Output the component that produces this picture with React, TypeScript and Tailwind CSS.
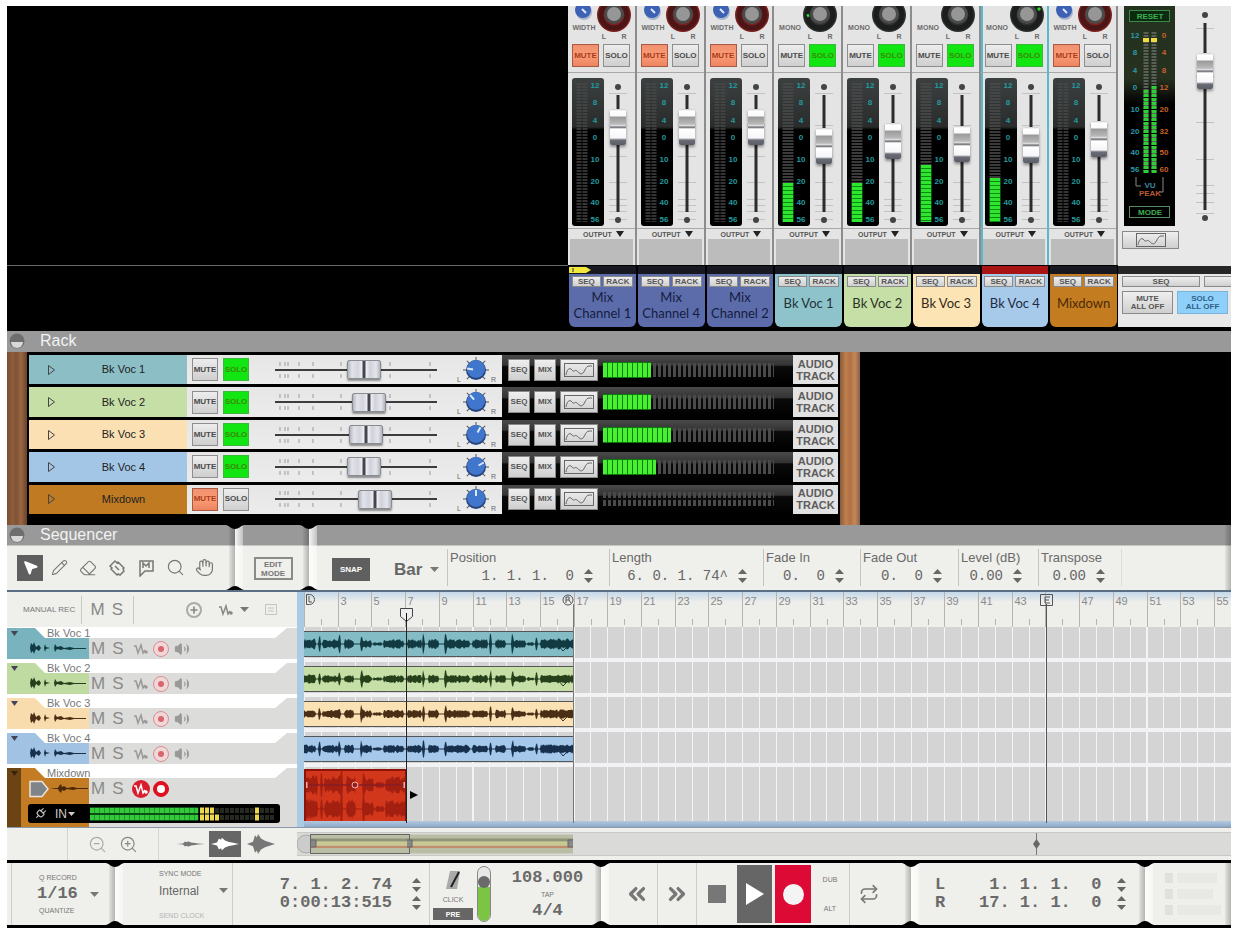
import { useState } from "react";
import type { ReactNode } from "react";
import {
  ChevronsLeft,
  ChevronsRight,
  Eraser,
  Hand,
  MousePointer2,
  Pencil,
  Plug,
  Plus,
  Repeat,
  Search,
  Volume2,
  ZoomIn,
  ZoomOut,
} from "lucide-react";
import { clsx } from "clsx";

interface Channel {
  name: string;
  color: string;
  text: string;
  stereo: boolean;
  muted: boolean;
  solo: boolean;
  fader: number;
  meterTop?: number;
  panTick?: string;
  selected?: boolean;
}

const blue = "bg-[#5c6cab]";

const channels: Channel[] = [
  { name: "Mix Channel 1", color: blue, text: "text-[#141c40]", stereo: true, muted: true, solo: false, fader: 78 },
  { name: "Mix Channel 4", color: blue, text: "text-[#141c40]", stereo: true, muted: true, solo: false, fader: 78 },
  { name: "Mix Channel 2", color: blue, text: "text-[#141c40]", stereo: true, muted: true, solo: false, fader: 78 },
  { name: "Bk Voc 1", color: "bg-[#8fc3cb]", text: "text-[#22333a]", stereo: false, muted: false, solo: true, fader: 57, meterTop: 105, panTick: "M33 10l2-1" },
  { name: "Bk Voc 2", color: "bg-[#c6dfa6]", text: "text-[#2b3322]", stereo: false, muted: false, solo: true, fader: 63, meterTop: 105 },
  { name: "Bk Voc 3", color: "bg-[#fce4b4]", text: "text-[#33291a]", stereo: false, muted: false, solo: true, fader: 59, meterTop: 87 },
  { name: "Bk Voc 4", color: "bg-[#a8caea]", text: "text-[#1d2c44]", stereo: false, muted: false, solo: true, fader: 58, meterTop: 100, panTick: "M57 4l2-2", selected: true },
  { name: "Mixdown", color: "bg-[#c47c20]", text: "text-[#4a2a08]", stereo: true, muted: true, solo: false, fader: 65 },
];

interface RackTrack {
  name: string;
  color: string;
  muted: boolean;
  fader: number;
  angle: number;
  lit: number;
}

const rackTracks: RackTrack[] = [
  { name: "Bk Voc 1", color: "bg-[#8cbec6]", muted: false, fader: 56, angle: -80, lit: 9 },
  { name: "Bk Voc 2", color: "bg-[#c6dfa6]", muted: false, fader: 60, angle: -40, lit: 9 },
  { name: "Bk Voc 3", color: "bg-[#fae0b2]", muted: false, fader: 58, angle: 30, lit: 13 },
  { name: "Bk Voc 4", color: "bg-[#a4c6e6]", muted: false, fader: 56, angle: 60, lit: 10 },
  { name: "Mixdown", color: "bg-[#c07a22]", muted: true, fader: 65, angle: 0, lit: 0 },
];

interface SeqTrack {
  name: string;
  color: string;
  clip: string;
  wave: string;
}

const seqTracks: SeqTrack[] = [
  { name: "Bk Voc 1", color: "bg-[#79b3bd]", clip: "bg-[#83bcc4]", wave: "#123a42" },
  { name: "Bk Voc 2", color: "bg-[#c0dba2]", clip: "bg-[#c6dfa6]", wave: "#26401c" },
  { name: "Bk Voc 3", color: "bg-[#f8dcae]", clip: "bg-[#fae2b4]", wave: "#4a2f16" },
  { name: "Bk Voc 4", color: "bg-[#a2c2e4]", clip: "bg-[#a6c8ea]", wave: "#16304e" },
];

const METER_MARKS = [
  ["12", 10],
  ["8", 27],
  ["4", 45],
  ["0", 62],
  ["10", 84],
  ["20", 106],
  ["40", 127],
  ["56", 144],
] as const;

const BAR_WIDTH = 16.85;

// start, end, height of each burst of sound in a clip
const bursts = [
  [0, 11, 5], [15, 16, 8], [19, 34, 4.5], [35, 36, 9], [41, 49, 5], [57, 58, 10], [59, 67, 4.5], [70, 77, 2],
  [80, 99, 4.5], [104, 117, 4.5], [119, 120, 10], [125, 134, 5], [141, 142, 10], [143, 165, 4.5], [169, 183, 4.5],
  [186, 187, 10], [192, 201, 4.5], [208, 209, 10], [210, 221, 4], [224, 229, 2], [232, 233, 7], [237, 269, 5],
];

function noise(i: number) {
  const x = Math.sin(i * 12.9898) * 43758.5453;
  return x - Math.floor(x);
}

function wavePath(width: number, mid: number, scale: number, seed: number) {
  const amps: number[] = [];
  for (let x = 0; x <= width; x++) {
    const burst = bursts.find(([s, e]) => x >= s && x <= e);
    amps.push(burst ? burst[2] * (0.5 + 0.5 * noise(x + seed)) * scale : 0.6);
  }
  const top = amps.map((a, x) => `${x},${(mid - a).toFixed(1)}`);
  const bottom = amps.map((a, x) => `${x},${(mid + a).toFixed(1)}`).reverse();
  return `M${top.join("L")}L${bottom.join("L")}Z`;
}

function LampButton({ kind, on, className }: { kind: "MUTE" | "SOLO"; on: boolean; className: string }) {
  const [lit, setLit] = useState(on);
  return (
    <button
      onClick={() => setLit(!lit)}
      aria-pressed={lit}
      className={clsx(
        "flex items-center justify-center border text-[8px] font-bold leading-none",
        className,
        !lit && "border-[#8e8e8e] bg-linear-to-b from-[#ededed] to-[#cfcfcf] text-[#4a4a4a]",
        lit && kind === "MUTE" && "border-[#a85a44] bg-linear-to-b from-[#f09070] via-[#fb9c74] to-[#ec8462] text-[#a83c1c]",
        lit && kind === "SOLO" && "border-[#3ab83a] bg-[#12e612] text-[#3a8a08]"
      )}
    >
      {kind}
    </button>
  );
}

function SmallButton({ children, className }: { children?: ReactNode; className?: string }) {
  return (
    <button
      className={clsx(
        "flex items-center justify-center border border-[#8a8a8a] bg-linear-to-b from-[#efefef] to-[#cfcfcf] text-[8px] font-bold leading-none text-[#555]",
        className
      )}
    >
      {children}
    </button>
  );
}

function CurveIcon() {
  return (
    <svg width="32" height="16" viewBox="0 0 32 16" fill="none" stroke="#666" aria-hidden="true">
      <rect x="1.5" y="1.5" width="29" height="13" />
      <path d="M3 13c1-6 4-8 6-5s3-1 5 1 4 4 6 2 3-7 6-7h3" />
    </svg>
  );
}

function VerticalFader({ label, value, tall }: { label: string; value: number; tall?: boolean }) {
  return (
    <input
      type="range"
      aria-label={label}
      defaultValue={value}
      className={clsx(
        "[grid-area:1/1] m-0 w-4 appearance-none self-center justify-self-center bg-transparent [direction:rtl] [writing-mode:vertical-lr]",
        tall ? "h-[198px]" : "h-[124px]",
        "[&::-webkit-slider-thumb]:h-9 [&::-webkit-slider-thumb]:w-4 [&::-webkit-slider-thumb]:appearance-none",
        "[&::-webkit-slider-thumb]:rounded-[2px] [&::-webkit-slider-thumb]:shadow-[0_2px_3px_rgba(0,0,0,0.4)]",
        "[&::-webkit-slider-thumb]:bg-[linear-gradient(#c8c8cc_0,#fff_2px,#fafafa_7px,#9a9a9a_8px,#b8b8b8_15px,#e8e8ea_17px,#55565c_18px,#fff_20px,#f6f6fa_29px,#6b6d76_31px,#5a5c66_36px)]"
      )}
    />
  );
}

function FaderScale({ height }: { height: number }) {
  const ticks = [0.1, 0.32, 0.53, 0.7, 0.82, 0.86, 0.9, 0.95];
  return (
    <svg width="24" height={height} className="[grid-area:1/1]" aria-hidden="true">
      {ticks.map((t) => (
        <path key={t} d={`M3 ${Math.round(t * height)}.5h18`} stroke="#c2c2c2" />
      ))}
      <path d={`M12 ${17}V${height - 14}`} stroke="#2c2c2c" strokeWidth="3" />
      <circle cx="12" cy="9" r="3" fill="#444" />
      <circle cx="12" cy={height - 6} r="3" fill="#444" />
    </svg>
  );
}

function ChannelMeter({ stereo, top }: { stereo: boolean; top?: number }) {
  return (
    <svg
      width="32"
      height="148"
      className="shrink-0 rounded-[3px] bg-[linear-gradient(#3c4040,#2a2c2c_33%,#000_35%)]"
      aria-hidden="true"
    >
      {stereo ? (
        <>
          <path d="M7 5V144" stroke="#4a4a4a" strokeWidth="5" strokeDasharray="2 1" opacity="0.7" />
          <path d="M13 5V144" stroke="#4a4a4a" strokeWidth="5" strokeDasharray="2 1" opacity="0.7" />
        </>
      ) : (
        <path d="M10 5V144" stroke="#4a4a4a" strokeWidth="11" strokeDasharray="2 1" opacity="0.8" />
      )}
      {top && (
        <>
          <path d={`M10 ${top}V144`} stroke="#0a8a14" strokeWidth="11" />
          <path d={`M10 ${top}V144`} stroke="#2fe62f" strokeWidth="10" strokeDasharray="3 1" />
        </>
      )}
      {METER_MARKS.map(([mark, y]) => (
        <text key={mark} x="23" y={y} textAnchor="middle" fontSize="8" fontWeight="bold" fill="#239a9e">
          {mark}
        </text>
      ))}
    </svg>
  );
}

function StripKnobs({ channel }: { channel: Channel }) {
  return (
    <svg width="66" height="34" className="shrink-0 overflow-hidden" aria-hidden="true">
      {channel.stereo && (
        <>
          <circle cx="16" cy="6" r="8" fill="#a9b4cc" />
          <circle cx="15" cy="4" r="8" fill="#3d62b4" />
          <path d="M14 3l4 4" stroke="#dfe8ff" strokeWidth="2" />
        </>
      )}
      <circle cx="46" cy="9" r="17" fill={channel.stereo ? "#7c1f1f" : "#2c302e"} />
      <circle cx="46" cy="9" r="13" fill="none" stroke={channel.stereo ? "#4c1616" : "#1c1e1d"} strokeWidth="5" />
      <circle cx="46" cy="8" r="10" fill="#4a4a4a" />
      <circle cx="46" cy="8" r="7" fill="#969696" />
      {channel.panTick && <path d={channel.panTick} stroke="#2ee02e" strokeWidth="3" />}
      <text x="16" y="24" textAnchor="middle" fontSize="7" fontWeight="bold" fill="#6a6a6a">
        {channel.stereo ? "WIDTH" : "MONO"}
      </text>
      <text x="36" y="33" textAnchor="middle" fontSize="7" fontWeight="bold" fill="#6a6a6a">
        L
      </text>
      <text x="56" y="33" textAnchor="middle" fontSize="7" fontWeight="bold" fill="#6a6a6a">
        R
      </text>
    </svg>
  );
}

function Strip({ channel, first }: { channel: Channel; first: boolean }) {
  return (
    <section className="flex min-w-0 flex-col bg-black">
      <div
        className={clsx(
          "flex h-[259px] flex-col border-r-2 bg-[#e4e4e4]",
          channel.selected ? "border-[#58b8cc] shadow-[inset_2px_0_#58b8cc]" : "border-[#8c8c8c]"
        )}
      >
        <StripKnobs channel={channel} />
        <div className="flex gap-1 border-b border-[#a8a8a8] px-1 pt-1 pb-[5px]">
          <LampButton kind="MUTE" on={channel.muted} className="h-[23px] w-[27px]" />
          <LampButton kind="SOLO" on={channel.solo} className="h-[23px] w-[27px]" />
        </div>
        <div className="flex gap-0.5 border-b border-[#a8a8a8] pt-[5px] pb-0.5 pl-1">
          <ChannelMeter stereo={channel.stereo} top={channel.meterTop} />
          <div className="grid">
            <FaderScale height={148} />
            <VerticalFader label={`${channel.name} level`} value={channel.fader} />
          </div>
        </div>
        <button className="flex h-2.5 items-center justify-end gap-1 pr-[11px] text-[7px] font-bold leading-none text-[#555]">
          OUTPUT
          <svg width="8" height="6" aria-hidden="true">
            <path d="M0 0h8l-4 6z" fill="#222" />
          </svg>
        </button>
        <div className="mx-0.5 h-[26px] bg-[#bcbcbc]" />
      </div>
      <div className={clsx("mx-px mt-px h-2", channel.selected ? "bg-[#a81414]" : "bg-[#181820]")}>
        {first && (
          <svg width="24" height="8" aria-hidden="true">
            <path d="M0 1h17l5 3-5 3H0z" fill="#f2e83c" />
            <path d="M4 2v4" stroke="#333" />
          </svg>
        )}
      </div>
      <div className={clsx("mx-px flex h-[53px] flex-col rounded-b-md", channel.color, channel.text)}>
        <div className="flex justify-center gap-0.5 pt-0.5">
          <SmallButton className="h-[11px] w-[29px]">SEQ</SmallButton>
          <SmallButton className="h-[11px] w-[30px]">RACK</SmallButton>
        </div>
        <div
          className={clsx(
            "text-center font-[Lato,sans-serif] text-[13px] leading-4",
            channel.name.startsWith("Mix ") ? "px-0.5 pt-0.5" : "pt-2"
          )}
        >
          {channel.name}
        </div>
      </div>
    </section>
  );
}

const MASTER_PEAK = ["0", "4", "8", "12", "20", "32", "50", "60"];

function MasterSection() {
  return (
    <section className="flex w-[113px] shrink-0 flex-col overflow-hidden bg-[#e8e8e8]">
      <div className="flex h-[260px] pl-1">
        <div className="flex flex-col">
          <svg width="51" height="220" className="ml-0.5 bg-[linear-gradient(#23331f,#26301f_33%,#000_45%)]" fontWeight="bold">
            <rect x="5.5" y="4.5" width="40" height="11" fill="#0c2a10" stroke="#3d8a48" />
            <text x="26" y="13" textAnchor="middle" fontSize="8" fill="#3fae50">RESET</text>
            <path d="M22 26V167M30 26V167" stroke="#5a5f58" strokeWidth="5" strokeDasharray="2 1" />
            <path d="M22 84V167M30 80V167" stroke="#2fce36" strokeWidth="5" strokeDasharray="3 1" />
            <path d="M19 34h6M27 34h6" stroke="#f0dc3c" strokeWidth="4" />
            {METER_MARKS.map(([mark, y], i) => (
              <g key={mark} fontSize="8" textAnchor="middle">
                <text x="11" y={y + 22} fill="#2a9aa8">{mark}</text>
                <text x="40" y={y + 22} fill="#c8602c">{MASTER_PEAK[i]}</text>
              </g>
            ))}
            <path d="M12 171v9h5M39 171v15h-4" fill="none" stroke="#888" />
            <text x="26" y="182" textAnchor="middle" fontSize="8" fill="#3d8aa0">VU</text>
            <text x="26" y="190" textAnchor="middle" fontSize="8" fill="#b85a30">PEAK</text>
            <rect x="5.5" y="200.5" width="40" height="11" fill="none" stroke="#5a8a60" />
            <text x="26" y="209" textAnchor="middle" fontSize="8" fill="#3fae50">MODE</text>
          </svg>
          <SmallButton className="mt-[5px] h-[18px] w-[57px]">
            <CurveIcon />
          </SmallButton>
        </div>
        <div className="ml-[14px] grid h-[218px]">
          <FaderScale height={218} />
          <VerticalFader label="Master level" value={77} tall />
        </div>
      </div>
      <div className="h-2 bg-[#262626]" />
      <div className="flex gap-1 pt-0.5 pl-1">
        <SmallButton className="h-[11px] w-[78px] shrink-0">SEQ</SmallButton>
        <SmallButton className="h-[11px] grow border-r-0" />
      </div>
      <div className="flex gap-1 pt-1 pl-1">
        <SmallButton className="h-[23px] w-[51px]">
          MUTE
          <br />
          ALL OFF
        </SmallButton>
        <button className="h-[23px] w-[51px] border border-[#78b4dc] bg-[#8ed0fa] text-[8px] font-bold leading-none text-[#2f5f86]">
          SOLO
          <br />
          ALL OFF
        </button>
      </div>
    </section>
  );
}

function Mixer() {
  return (
    <div className="flex bg-black pb-1">
      <div className="h-[260px] grow border-b border-[#6a6a6a]" />
      <div className="grid w-[550px] shrink-0 grid-cols-8">
        {channels.map((channel, i) => (
          <Strip key={channel.name} channel={channel} first={i === 0} />
        ))}
      </div>
      <MasterSection />
    </div>
  );
}

function SectionTitle({ title }: { title: string }) {
  return (
    <div className="flex items-center gap-[15px] pl-0.5">
      <svg width="16" height="16" aria-hidden="true">
        <circle cx="8" cy="8" r="7.5" fill="#6e6e6e" />
        <path d="M2 9h12a6 6 0 0 1-12 0z" fill="#d8d8d8" />
      </svg>
      <h2 className="text-base leading-5 text-[#f2f2f2]">{title}</h2>
    </div>
  );
}

function RackKnob({ angle }: { angle: number }) {
  return (
    <svg width="42" height="28" className="shrink-0" aria-hidden="true">
      <g stroke="#555">
        {[-135, -90, -45, 0, 45, 90, 135].map((a) => (
          <path key={a} d="M20 1v4" transform={`rotate(${a} 20 14)`} />
        ))}
      </g>
      <circle cx="20" cy="14" r="10" fill="#27437c" />
      <circle cx="20" cy="13" r="9" fill="#4076cc" />
      <path d="M20 5v6" stroke="#dce8ff" strokeWidth="2" transform={`rotate(${angle} 20 14)`} />
      <text x="1" y="26" fontSize="7" fill="#666">L</text>
      <text x="35" y="26" fontSize="7" fill="#666">R</text>
    </svg>
  );
}

function RackRow({ track }: { track: RackTrack }) {
  return (
    <div className="flex flex-1 items-stretch">
      <div className={clsx("flex w-[158px] items-center pl-4 text-[#222]", track.color)}>
        <button aria-label={`Expand ${track.name}`} className="pl-0.5">
          <svg width="9" height="12" aria-hidden="true">
            <path d="M1.500 1.500v9l6-4.500z" fill="none" stroke="#444" />
          </svg>
        </button>
        <span className="grow pr-3 pl-4 text-center text-[11px]">{track.name}</span>
      </div>
      <div className="flex w-[315px] items-center bg-linear-to-b from-[#e6e6e6] to-[#ececec] pl-[5px]">
        <LampButton kind="MUTE" on={track.muted} className="h-[23px] w-[26px]" />
        <LampButton kind="SOLO" on={!track.muted} className="ml-[5px] h-[23px] w-[26px]" />
        <div className="ml-[26px] grid w-[162px] items-center">
          <svg width="162" height="20" className="[grid-area:1/1]" aria-hidden="true">
            <path d="M5 2v4M10 2v4M13 2v4M24 2v4M38 2v4M66 2v4M115 2v4M155 2v4M5 14v4M10 14v4M13 14v4M24 14v4M38 14v4M66 14v4M115 14v4M155 14v4" stroke="#999" />
            <path d="M0 10h162" stroke="#3c3c3c" strokeWidth="2" />
          </svg>
          <input
            type="range"
            aria-label={`${track.name} level`}
            defaultValue={track.fader}
            className="[grid-area:1/1] m-0 h-[22px] w-full appearance-none bg-transparent [&::-webkit-slider-thumb]:h-[19px] [&::-webkit-slider-thumb]:w-[34px] [&::-webkit-slider-thumb]:appearance-none [&::-webkit-slider-thumb]:rounded-[2px] [&::-webkit-slider-thumb]:border [&::-webkit-slider-thumb]:border-[#8a8c94] [&::-webkit-slider-thumb]:bg-[linear-gradient(90deg,#b4b6be,#e2e3ea_4px,#d2d4dc_10px,#eeeef4_14px,#44464c_15px,#44464c_17px,#f0f0f6_18px,#cfd1da_22px,#e4e5ec_28px,#b4b6be)] [&::-webkit-slider-thumb]:shadow-[0_2px_2px_rgba(0,0,0,0.4)]"
          />
        </div>
        <div className="grow" />
        <RackKnob angle={track.angle} />
        <div className="w-1" />
      </div>
      <div className="flex grow items-center gap-1 bg-[linear-gradient(#4a4a4a_0,#333_35%,#0a0a0a_40%,#000)] pl-1.5">
        <SmallButton className="h-[22px] w-[22px]">SEQ</SmallButton>
        <SmallButton className="h-[22px] w-[22px]">MIX</SmallButton>
        <SmallButton className="h-[22px] w-[38px]">
          <CurveIcon />
        </SmallButton>
        <svg width="174" height="16" aria-hidden="true">
          <path d="M1 8H172" stroke="#4a4a4a" strokeWidth="14" strokeDasharray="3 2" />
          {track.lit === 0 && <path d="M0 8H172" stroke="#0c0c0c" strokeWidth="2" />}
          {track.lit > 0 && (
            <>
              <path d={`M1 8h${track.lit * 5 + 3}`} stroke="#0c7a10" strokeWidth="16" />
              <path d={`M1 8h${track.lit * 5 + 3}`} stroke="#48f030" strokeWidth="14" strokeDasharray="4 1" />
            </>
          )}
        </svg>
      </div>
      <div className="flex w-[45px] items-center justify-center bg-[#e2e2e2] text-center text-[11px] leading-3 font-bold text-[#5c5c5c]">
        AUDIO
        <br />
        TRACK
      </div>
    </div>
  );
}

function Rack() {
  return (
    <section>
      <div className="bg-[#999] pb-px">
        <SectionTitle title="Rack" />
      </div>
      <div className="flex bg-black">
        <div className="w-5 bg-[linear-gradient(90deg,#7a4e30,#8f5f3c_30%,#7e5234_45%,#986642_70%,#6a4228)]" />
        <div className="flex h-[173px] w-[813px] flex-col gap-[3px] pt-[3px] pr-0.5 pb-[11px] pl-0.5">
          {rackTracks.map((track) => (
            <RackRow key={track.name} track={track} />
          ))}
        </div>
        <div className="w-5 bg-[linear-gradient(90deg,#8a5a38,#c08050_30%,#b07040_50%,#c4885a_75%,#8a6048)]" />
      </div>
    </section>
  );
}

// One moulded piece of the console face, with the dark joints at its left corners
function Panel({ children, className, joint = true }: { children: ReactNode; className?: string; joint?: boolean }) {
  return (
    <div className={clsx("relative flex", className)}>
      {joint && <div className="w-2 shrink-0 bg-linear-to-r from-white/90 to-white/40" />}
      {children}
      <div className="w-1.5 shrink-0 bg-linear-to-r from-black/5 to-black/25" />
      {joint && (
        <>
          <svg width="18" height="4" className="absolute top-0 -left-[9px] z-10" aria-hidden="true">
            <path d="M0 0h18c-4 1-5 4-9 4S4 1 0 0z" fill="#000" />
          </svg>
          <svg width="18" height="4" className="absolute bottom-0 -left-[9px] z-10" aria-hidden="true">
            <path d="M0 4h18c-4-1-5-4-9-4S4 3 0 4z" fill="#000" />
          </svg>
        </>
      )}
    </div>
  );
}

function Spinner({ label, className }: { label: string; className?: string }) {
  return (
    <span className={clsx("flex flex-col gap-1", className)}>
      <button aria-label={`${label} up`}>
        <svg width="9" height="5" className="block" aria-hidden="true">
          <path d="M0 5l4.500-5L9 5z" fill="#666" />
        </svg>
      </button>
      <button aria-label={`${label} down`}>
        <svg width="9" height="5" className="block" aria-hidden="true">
          <path d="M0 0h9L4.500 5z" fill="#666" />
        </svg>
      </button>
    </span>
  );
}

function Caret() {
  return (
    <svg width="9" height="5" aria-hidden="true">
      <path d="M0 0h9L4.500 5z" fill="#777" />
    </svg>
  );
}

const inspector = [
  { label: "Position", value: "1. 1. 1.  0", width: "w-[162px]" },
  { label: "Length", value: "6. 0. 1. 74^", width: "w-[154px]" },
  { label: "Fade In", value: "0.  0", width: "w-[97px]" },
  { label: "Fade Out", value: "0.  0", width: "w-[98px]" },
  { label: "Level (dB)", value: "0.00", width: "w-20" },
  { label: "Transpose", value: "0.00", width: "w-[83px]" },
];

function InspectorField({ label, value, width }: { label: string; value: string; width: string }) {
  const id = label.toLowerCase().replace(/\W+/g, "-");
  return (
    <div className={clsx("my-1 shrink-0 border-l border-[#c4c4c0] pl-0.5", width)}>
      <label htmlFor={id} className="block text-[13px] leading-[18px] text-[#6a6a6a]">
        {label}
      </label>
      <div className="flex items-center gap-2.5 pr-4">
        <input
          id={id}
          defaultValue={value}
          className="w-0 min-w-0 grow bg-transparent text-right font-['Liberation_Mono',monospace] text-sm leading-[18px] text-[#666] outline-none"
        />
        <Spinner label={label} />
      </div>
    </div>
  );
}

const tools = [
  { label: "Selection tool", icon: <MousePointer2 size={17} fill="#fff" stroke="#fff" /> },
  { label: "Pencil tool", icon: <Pencil size={17} strokeWidth={1.5} /> },
  { label: "Eraser tool", icon: <Eraser size={18} strokeWidth={1.5} /> },
  {
    label: "Razor tool",
    icon: (
      <svg width="18" height="18" fill="none" stroke="currentColor" strokeWidth="1.500">
        <path d="M2 7l5-5 2 2 1-1 6 6-1 1 1 2-4 4-2-1-1 1-6-6 1-1zM7 7l4 4" />
      </svg>
    ),
  },
  {
    label: "Mute tool",
    icon: (
      <svg width="18" height="18" fill="none" stroke="currentColor" strokeWidth="1.500">
        <path d="M3 17V2h13v10H8zM6 9V4l3 3 3-3v5" />
      </svg>
    ),
  },
  { label: "Magnifying glass tool", icon: <Search size={19} strokeWidth={1.5} /> },
  { label: "Hand tool", icon: <Hand size={19} strokeWidth={1.5} /> },
];

function SequencerToolbar() {
  return (
    <div className="flex h-[67px] border-b-2 border-[#5c6e84] bg-[linear-gradient(#999_0,#999_20px,#efefeb_21px)]">
      <Panel joint={false} className="w-[228px] shrink-0">
        <div className="flex grow flex-col">
          <SectionTitle title="Sequencer" />
          <div className="flex grow items-center gap-[3px] pl-2.5 text-[#777]">
            {tools.map((tool, i) => (
              <button
                key={tool.label}
                aria-label={tool.label}
                className={clsx("flex size-[26px] items-center justify-center", i === 0 && "bg-[#5f5f5f]")}
              >
                {tool.icon}
              </button>
            ))}
          </div>
        </div>
      </Panel>
      <Panel className="w-[74px] shrink-0">
        <button className="mx-auto mt-8 h-[23px] w-[39px] border-2 border-[#8a8a8a] text-[8px] leading-[9px] font-bold text-[#777]">
          EDIT
          <br />
          MODE
        </button>
      </Panel>
      <Panel className="min-w-0 grow">
        <div className="flex min-w-0 grow overflow-hidden pt-5">
          <button className="mt-[13px] ml-[15px] h-[23px] w-[38px] shrink-0 bg-[#5f5f5f] text-[8px] font-bold text-white">
            SNAP
          </button>
          <button className="ml-6 flex w-[45px] shrink-0 items-center justify-between pt-1 text-[17px] font-bold text-[#666]">
            Bar
            <Caret />
          </button>
          <div className="w-2 shrink-0" />
          {inspector.map((field) => (
            <InspectorField key={field.label} {...field} />
          ))}
          <div className="my-1 border-l border-[#dcdcd8]" />
        </div>
      </Panel>
    </div>
  );
}

function AutomationIcon({ color = "#888" }: { color?: string }) {
  return (
    <svg width="16" height="12" fill="none" stroke={color} strokeWidth="1.500" aria-hidden="true">
      <path d="M1 3l2 0 2 7 3-8 2 8 2-3" />
      <circle cx="13" cy="9" r="1" fill={color} />
    </svg>
  );
}

function MiniWave({ color }: { color: string }) {
  return (
    <svg width="58" height="16" aria-hidden="true">
      <path
        d="M0 8l2-1 1-5 2 2 1-3 2 5 3-2 2 3h3l1-4 1 3 4 1h4l1-4 2 3 4-1 3 2 6-1 4 1h12v1H46l-4 1-6-1-3 1-4-1-2 3-1-4h-4l-4 1-1 3-1-4h-3l-2 3-3-2-2 5-1-3-2 2-1-5z"
        fill={color}
      />
    </svg>
  );
}

function TrackTools({ name, armed }: { name: string; armed?: boolean }) {
  return (
    <div className="flex items-center text-[17px] leading-5 text-[#8a8a8a]">
      <button aria-label={`Mute ${name}`} className="w-5">
        M
      </button>
      <button aria-label={`Solo ${name}`} className="w-5">
        S
      </button>
      <button
        aria-label={`Record automation on ${name}`}
        className={clsx("ml-1 flex size-[18px] items-center justify-center rounded-full", armed && "bg-[#d81e2c]")}
      >
        <AutomationIcon color={armed ? "#fff" : "#999"} />
      </button>
      <button aria-label={`Record ${name}`} className="ml-0.5">
        <svg width="18" height="18" className="block" aria-hidden="true">
          <circle cx="9" cy="9" r="7.500" fill={armed ? "#e01020" : "#f0d8d8"} stroke={armed ? "#e01020" : "#dc8c90"} />
          <circle cx="9" cy="9" r={armed ? 4 : 3} fill={armed ? "#fff" : "#d8666c"} />
        </svg>
      </button>
      {!armed && (
        <button aria-label={`Monitor ${name}`} className="ml-1 text-[#999]">
          <Volume2 size={16} fill="currentColor" strokeWidth={1.5} />
        </button>
      )}
    </div>
  );
}

const tabShape = "[clip-path:polygon(0_10px,268px_10px,280px_0,100%_0,100%_100%,0_100%)]";
const labelShape = "[clip-path:polygon(0_0,28px_0,38px_10px,100%_10px,100%_100%,0_100%)]";

function TrackHeader({ track }: { track: SeqTrack }) {
  return (
    <div className="grid h-[35px] bg-white pt-px pb-1">
      <div className={clsx("[grid-area:1/1] bg-[#dcdcda]", tabShape)} />
      <div className={clsx("[grid-area:1/1] w-[82px]", track.color, labelShape)}>
        <svg width="8" height="6" className="mt-[3px] ml-1" aria-hidden="true">
          <path d="M0 0h7L3.500 5z" fill="#445" />
        </svg>
      </div>
      <div className="relative [grid-area:1/1] flex flex-col">
        <span className="pl-10 text-[11px] leading-[11px] text-[#777]">{track.name}</span>
        <div className="flex items-center gap-0.5 pl-[21px]">
          <MiniWave color={track.wave} />
          <TrackTools name={track.name} />
        </div>
      </div>
    </div>
  );
}

function InputMeter() {
  return (
    <div className="flex h-[19px] w-[252px] items-center rounded-[3px] bg-black px-1.5 text-[#ccc]">
      <Plug size={13} className="rotate-45" />
      <button className="ml-2 flex items-center gap-px text-xs leading-none">
        IN
        <svg width="7" height="4" aria-hidden="true">
          <path d="M0 0h7L3.500 4z" fill="#ccc" />
        </svg>
      </button>
      <svg width="184" height="16" className="ml-auto" aria-hidden="true">
        <path d="M0 4.500H184M0 11.500H184" stroke="#262822" strokeWidth="5" strokeDasharray="4 1" />
        <path d="M0 4.500H108M0 11.500H108" stroke="#1c9a28" strokeWidth="6" />
        <path d="M0 4.500H108M0 11.500H108" stroke="#34c83c" strokeWidth="5" strokeDasharray="4 1" />
        <path d="M110 4.500H124M110 11.500H129M165 4.500h4M165 11.500h4" stroke="#ecd84c" strokeWidth="6" strokeDasharray="4 1" />
      </svg>
    </div>
  );
}

function MixdownHeader() {
  return (
    <div className="grid h-[60px] bg-white pt-px">
      <div className={clsx("[grid-area:1/1] bg-[#dcdcda]", tabShape)} />
      <div
        className={clsx(
          "[grid-area:1/1] w-[82px] bg-[linear-gradient(90deg,#6c4414_14px,#c47c24_14px)]",
          labelShape
        )}
      >
        <svg width="8" height="6" className="mt-[3px] ml-1" aria-hidden="true">
          <path d="M0 0h7L3.500 5z" fill="#3a2208" />
        </svg>
      </div>
      <div className="relative [grid-area:1/1] flex flex-col">
        <span className="pl-10 text-[11px] leading-[11px] text-[#777]">Mixdown</span>
        <div className="flex items-center pl-[21px]">
          <svg width="22" height="18" aria-hidden="true">
            <path d="M2 1.500h12l6 7.500-6 7.500H2z" fill="#7e8488" stroke="#e8e4dc" strokeWidth="1.500" />
          </svg>
          <svg width="38" height="12" aria-hidden="true">
            <path d="M0 6l6-1 2 0 1-2 2-2 1 3 2-1 3 2 6-1 4 1h11v1H27l-4 1-6-1-3 2-2-1-1 3-2-2-1-2z" fill="#4a2808" />
          </svg>
          <TrackTools name="Mixdown" armed />
        </div>
        <div className="mt-[5px] pl-[21px]">
          <InputMeter />
        </div>
      </div>
    </div>
  );
}

function TrackList() {
  return (
    <div className="w-[290px] shrink-0 bg-white">
      <div className="flex h-[35px] items-center bg-[#efefeb] pl-4 text-[17px] text-[#888]">
        <button className="w-[58px] text-left text-[8px] whitespace-nowrap text-[#777]">MANUAL REC</button>
        <div className="flex h-7 w-[53px] items-center justify-center border-x border-[#c8c8c4]">
          <button className="w-5" aria-label="Mute all off">M</button>
          <button className="w-5" aria-label="Solo all off">S</button>
        </div>
        <button aria-label="Create track" className="ml-[52px] flex size-4 items-center justify-center rounded-full border-2 border-[#aaa]">
          <Plus size={10} strokeWidth={4} />
        </button>
        <button aria-label="Track parameter automation" className="ml-4 flex items-center gap-1.5">
          <AutomationIcon />
          <Caret />
        </button>
        <button aria-label="New note lane" className="ml-[15px]">
          <svg width="14" height="13" fill="none" stroke="#c4c4c0" aria-hidden="true">
            <path d="M1.500 1.500h11v10h-11zM4 5h6M4 8h6" />
          </svg>
        </button>
      </div>
      {seqTracks.map((track) => (
        <TrackHeader key={track.name} track={track} />
      ))}
      <MixdownHeader />
    </div>
  );
}

function Ruler() {
  const bars = Array.from({ length: 28 }, (_, i) => i * 2 + 1);
  return (
    <svg width="100%" height="35" className="block bg-[linear-gradient(#c4d8ea,#eeeeea_10px)]" aria-label="Bars">
      {bars.map((bar) => {
        const x = Math.round((bar - 1) * BAR_WIDTH) + 0.5;
        return (
          <g key={bar}>
            <path d={`M${x} 0V35M${x + 17} 27v6`} stroke="#b4b4b0" />
            {bar > 1 && bar !== 45 && (
              <text x={x + 2} y="13" fontSize="11" fill="#8a8a8a">
                {bar}
              </text>
            )}
          </g>
        );
      })}
      <g fill="none" stroke="#555">
        <path d="M2.500 2.500h3a5 5 0 0 1 0 10h-3zM5 4v6h3" />
        <circle cx="264" cy="8" r="5" />
        <path d="M262 11V5h3v3h-3M265 8l2 3" />
        <path d="M736.500 2.500h12v11h-12zM746 5h-5v6h5M741 8h4" />
      </g>
    </svg>
  );
}

const gridLines =
  "bg-[repeating-linear-gradient(90deg,#f4f4f4_0,#f4f4f4_1px,transparent_1px,transparent_16.85px)]";

function Timeline() {
  return (
    <div className="relative min-w-0 grow overflow-hidden border-l-[7px] border-[#aacbe4]">
      <Ruler />
      <div className="bg-[#d4d4d4]">
        <div className={gridLines}>
          {seqTracks.map((track, i) => (
            <div key={track.name} className="h-[35px] border-b-4 border-[#f2f2f4] pt-1">
              <button aria-label={`${track.name} clip`} className={clsx("block w-[269px] border-y border-[#555]", track.clip)}>
                <svg width="269" height="24" className="block" aria-hidden="true">
                  <path d={wavePath(269, 12, i === 0 ? 1.1 : 0.95, i * 31)} fill={track.wave} />
                  <path d="M255 14l4 5 5-5" fill="none" stroke={track.wave} />
                </svg>
              </button>
            </div>
          ))}
          <div className="h-[60px] pt-0.5">
            <button aria-label="Mixdown clip" className="block w-[103px] border-2 border-[#8c1408] bg-[#d2371c]">
              <svg width="99" height="51" className="block" aria-hidden="true">
                <path d={wavePath(99, 14, 2, 3)} fill="#a31f10" />
                <path d={wavePath(99, 38, 2, 9)} fill="#a31f10" />
                <path d="M0 14H99" stroke="#7a1c30" />
                <circle cx="49" cy="14" r="3" fill="none" stroke="#f0b0b0" />
                <path d="M0 11v6M99 11v6" stroke="#f0b0b0" strokeWidth="3" />
              </svg>
            </button>
          </div>
        </div>
      </div>
      <div className="pointer-events-none absolute inset-x-0 bottom-0 h-1.5 bg-linear-to-b from-[#b4c8e0] to-[#8ca8c8]" />
      <div className="pointer-events-none absolute top-3 bottom-1 left-[269px] w-px bg-[#777]" />
      <div className="pointer-events-none absolute top-3 bottom-1 left-[742px] w-px bg-[#555]" />
      <div className="pointer-events-none absolute top-4 bottom-1 left-[102px] w-px bg-[#222]" />
      <svg width="15" height="16" className="absolute top-[15px] left-[95px]" aria-hidden="true">
        <path d="M1.500 1.500h12v8l-6 5-6-5z" fill="#eee" stroke="#444" />
        <path d="M7.500 6v9" stroke="#111" />
      </svg>
      <svg width="8" height="8" className="absolute bottom-7 left-[106px]" aria-hidden="true">
        <path d="M0 0l8 4-8 4z" />
      </svg>
      <svg width="5" height="8" className="absolute bottom-7 -left-[5px]" aria-hidden="true">
        <path d="M5 0L0 4l5 4z" />
      </svg>
    </div>
  );
}

function WaveGlyph({ scale, color }: { scale: number; color: string }) {
  return (
    <svg width="28" height="22" aria-hidden="true">
      <path
        d="M0 11l6-2 2-6 2 2 1-3 3 4 4 2 3 1 7 2-7 2-3 1-4 2-3 4-1-3-2 2-2-6z"
        fill={color}
        transform={`translate(0 ${11 - 11 * scale}) scale(1 ${scale})`}
      />
    </svg>
  );
}

function NavigatorBar() {
  return (
    <div className="flex h-[33px] border-t border-[#8a9aac] bg-[#efefeb]">
      <div className="flex w-[290px] shrink-0 items-center pl-[60px] text-[#888]">
        <div className="flex h-full w-[92px] items-center gap-3 border-x border-[#d4d4d0] pl-5">
          <button aria-label="Zoom out">
            <ZoomOut size={19} strokeWidth={1.5} className="text-[#aaa]" />
          </button>
          <button aria-label="Zoom in">
            <ZoomIn size={19} strokeWidth={1.5} />
          </button>
        </div>
        <button aria-label="Small waveforms" className="ml-[18px]">
          <WaveGlyph scale={0.3} color="#777" />
        </button>
        <button aria-label="Medium waveforms" className="ml-1 flex h-[26px] w-8 items-center justify-center bg-[#666]">
          <WaveGlyph scale={0.7} color="#fff" />
        </button>
        <button aria-label="Large waveforms" className="ml-1.5">
          <WaveGlyph scale={1.1} color="#777" />
        </button>
      </div>
      <div className="relative my-1 flex grow items-center border-y border-[#c8c8c4] bg-[#dadad8]">
        <svg width="276" height="24" aria-hidden="true">
          <circle cx="9" cy="12" r="9" fill="#ccc" stroke="#aaa" />
          <rect x="13.500" y="2.500" width="263" height="19" fill="#b9bda4" />
          <path d="M14 8h262" stroke="#8e9478" strokeWidth="3" />
          <path d="M14 11.500h262" stroke="#c8c890" strokeWidth="4" />
          <path d="M14 15h262" stroke="#c08c6c" strokeWidth="2" />
          <rect x="13.500" y="2.500" width="99" height="19" fill="none" stroke="#666" />
          <path d="M14 8h5v7h-5M276 8h-5v7h5M110 8h5v7h-5" fill="#888" stroke="#666" />
        </svg>
        <svg width="8" height="22" className="absolute left-[735px]" aria-hidden="true">
          <path d="M4.500 0v22" stroke="#777" />
          <path d="M4.500 6L1 11l3.500 5L8 11z" fill="#666" />
        </svg>
      </div>
    </div>
  );
}

const readout = "font-['Liberation_Mono',monospace] text-[17px] leading-[18px] font-bold whitespace-pre text-[#6a6a6a]";
const tiny = "text-[7px] leading-none text-[#777]";

function TransportBar() {
  return (
    <div className="flex h-[68px] border-y-[3px] border-black bg-[#efefeb]">
      <Panel joint={false} className="w-[108px] shrink-0">
        <div className="ml-1 flex grow flex-col justify-center gap-1 border-l border-[#ccc] pl-[25px]">
          <span className={clsx(tiny, "pl-0.5")}>Q RECORD</span>
          <button className={clsx(readout, "flex items-center gap-3")}>
            1/16
            <Caret />
          </button>
          <span className={clsx(tiny, "pl-0.5")}>QUANTIZE</span>
        </div>
      </Panel>

      <Panel className="w-[486px] shrink-0">
        <div className="flex w-[110px] flex-col justify-between border-r border-[#ccc] pt-[7px] pr-1 pb-1.5 pl-9">
          <span className={tiny}>SYNC MODE</span>
          <button className="flex items-center justify-between pb-2 text-xs leading-4 font-medium text-[#666]">
            Internal
            <Caret />
          </button>
          <span className={clsx(tiny, "text-[#b4b4b4]")}>SEND CLOCK</span>
        </div>
        <div className="flex w-[197px] items-center justify-end gap-5 border-r border-[#ccc] pr-2">
          <div className={readout}>
            <div>7. 1. 2. 74</div>
            <div>0:00:13:515</div>
          </div>
          <div className="flex flex-col gap-1">
            <Spinner label="Bar position" />
            <Spinner label="Time position" />
          </div>
        </div>
        <div className="flex w-[46px] flex-col items-center justify-between pt-1.5 pb-[5px]">
          <svg width="16" height="22" aria-hidden="true">
            <path d="M5 2h10l-3 18H1z" fill="#aaa" />
            <path d="M6 18L14 3" stroke="#222" strokeWidth="2" />
          </svg>
          <button className={tiny}>CLICK</button>
          <button className="h-3 w-10 bg-[#666] text-[7px] leading-none font-bold text-white">PRE</button>
        </div>
        <svg width="16" height="58" className="mt-0.5 shrink-0" aria-label="Click level">
          <rect x="1.500" y="1.500" width="13" height="55" rx="6.500" fill="#e8e8e8" stroke="#888" />
          <path d="M2 22h12v28a6 6 0 0 1-12 0z" fill="#7cc444" />
          <circle cx="8" cy="17" r="6" fill="#6a6a6a" />
        </svg>
        <div className="flex grow flex-col items-center justify-center gap-1 pr-1 pl-3">
          <span className={readout}>108.000</span>
          <button className={tiny}>TAP</button>
          <span className={readout}>4/4</span>
        </div>
      </Panel>

      <Panel className="w-[310px] shrink-0">
        <div className="ml-2 flex grow items-stretch text-[#777]">
          <button aria-label="Rewind" className="flex w-[41px] items-center justify-center border-r border-[#ccc]">
            <ChevronsLeft size={26} strokeWidth={3} />
          </button>
          <button aria-label="Fast forward" className="flex w-[39px] items-center justify-center border-r border-[#ccc]">
            <ChevronsRight size={26} strokeWidth={3} />
          </button>
          <button aria-label="Stop" className="flex w-10 items-center justify-center">
            <span className="size-[18px] bg-[#777]" />
          </button>
          <button aria-label="Play" className="my-0.5 flex w-[35px] items-center justify-center bg-[#666]">
            <svg width="20" height="22" aria-hidden="true">
              <path d="M1 0l18 11L1 22z" fill="#fff" />
            </svg>
          </button>
          <button aria-label="Record" className="my-0.5 ml-[3px] flex w-9 items-center justify-center bg-[#dc0a34]">
            <span className="size-[21px] rounded-full bg-[#f4f4f4]" />
          </button>
          <div className="flex w-[39px] flex-col items-center justify-between border-r border-[#ccc] py-[13px]">
            <button className={tiny}>DUB</button>
            <button className={tiny}>ALT</button>
          </div>
          <button aria-label="Loop" className="flex w-[38px] items-center justify-center">
            <Repeat size={20} />
          </button>
        </div>
      </Panel>

      <Panel className="w-[234px] shrink-0">
        <div className="flex grow items-center pl-4">
          <div className={clsx(readout, "flex w-11 flex-col")}>
            <span>L</span>
            <span>R</span>
          </div>
          <div className={clsx(readout, "text-right")}>
            <div>1. 1. 1.  0</div>
            <div>17. 1. 1.  0</div>
          </div>
          <div className="ml-4 flex flex-col gap-1">
            <Spinner label="Left locator" />
            <Spinner label="Right locator" />
          </div>
        </div>
      </Panel>

      <Panel className="min-w-0 grow">
        <div className="flex grow flex-col justify-center gap-1.5 overflow-hidden pl-3">
          {["w-10", "w-9", "w-11"].map((width) => (
            <div key={width} className="flex gap-1">
              <span className="h-2.5 w-2 bg-[#e0e0dc]" />
              <span className={clsx("h-2.5 bg-[#e8e8e4]", width)} />
            </div>
          ))}
        </div>
      </Panel>
    </div>
  );
}

export default function App() {
  return (
    <main className="min-h-screen bg-white pt-1.5 pr-1.5 pb-[3px] pl-[7px] font-['Liberation_Sans',Arial,sans-serif]">
      <Mixer />
      <Rack />
      <SequencerToolbar />
      <div className="flex">
        <TrackList />
        <Timeline />
      </div>
      <NavigatorBar />
      <TransportBar />
    </main>
  );
}
